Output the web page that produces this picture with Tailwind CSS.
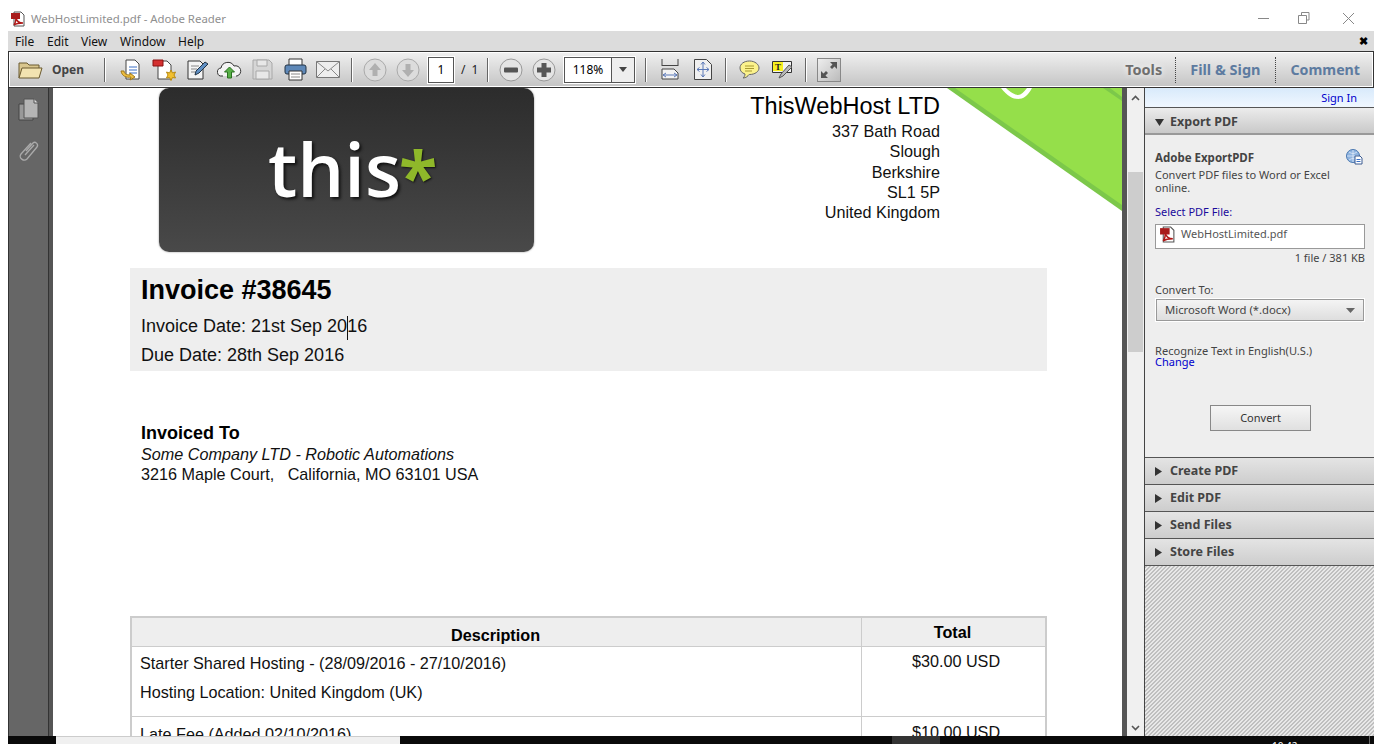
<!DOCTYPE html>
<html lang="en">
<head>
<meta charset="UTF-8" />
<title>WebHostLimited.pdf - Adobe Reader</title>
<script src="https://cdn.jsdelivr.net/npm/@tailwindcss/browser@4"></script>
</head>
<body class="bg-white overflow-hidden">
<div class="w-[1382px] h-[744px] flex flex-col overflow-hidden font-['Noto_Sans',sans-serif] text-[12px] text-[#222]">

  <!-- title bar -->
  <div class="h-[31px] shrink-0 flex items-center pl-[10px] pt-[7px] relative">
    <svg width="16" height="16" viewBox="0 0 16 16" class="shrink-0"><path d="M4 1h7l3 3v11H4z" fill="#fff" stroke="#555" /><path d="M1 2h9v6H1z" fill="#a81c1c" /><path d="M6 7c1 4 3 5 7 5-4 0-6 0-9 2 2-3 2-5 2-7z" fill="none" stroke="#b01818" stroke-width="1.4" /></svg>
    <span class="ml-[5px] text-[#8f8f8f] text-[11.400px]">WebHostLimited.pdf - Adobe Reader</span>
    <div class="absolute top-0 right-[8px] h-[31px] flex items-center text-[#777]">
      <svg width="116" height="31" viewBox="0 0 116 31"><path d="M0 18.500h11" stroke="#888" /><path d="M40.500 15.500h8v8h-8zM43.500 15v-2.500h7.500v7.500h-2" fill="none" stroke="#888" /><path d="M85 13l11 11M96 13L85 24" stroke="#888" /></svg>
    </div>
  </div>

  <!-- menu bar -->
  <div class="h-[20px] shrink-0 ml-[8px] mr-[8px] bg-[#dcdcdc] flex items-center pl-[7px] pt-[1px] text-[12px] text-[#111] relative">
    <span class="w-[32px]">File</span>
    <span class="w-[34px]">Edit</span>
    <span class="w-[39px]">View</span>
    <span class="w-[58px]">Window</span>
    <span>Help</span>
    <span class="absolute right-[6px] top-[0px] font-bold text-[11px] leading-[20px] text-black">✖</span>
  </div>

  <!-- toolbar -->
  <div class="h-[37px] shrink-0 ml-[8px] mr-[8px] border border-[#333] bg-gradient-to-b from-[#f0f0f0] to-[#c4c4c4] flex items-center relative shadow-[inset_0_0_0_1px_#fff]">
    <svg width="25" height="20" viewBox="0 0 25 20" class="ml-[9px] shrink-0"><path d="M1 18V3h8l2 2h10v3" fill="#d9c68e" stroke="#6b5a30" /><path d="M1 18L4 8h20l-3 10z" fill="#f2e3b1" stroke="#6b5a30" /></svg>
    <span class="ml-[9px] font-bold text-[12px] text-[#444] w-[33px]">Open</span>
    <div class="w-px h-[24px] bg-[#666] ml-[19px] border-r border-white box-content"></div>
    <svg width="24" height="24" viewBox="0 0 24 24" class="ml-[13px] shrink-0"><path d="M7 2h9l4 4v15H7z" fill="#fff" stroke="#444" /><path d="M10 9h8M10 12h8M10 15h8" stroke="#3a6fc4" /><path d="M2 13c1 5 5 7 10 6l-1 3 5-3-5-4 0 2c-3 0-6-1-6-4z" fill="#f0c040" stroke="#a07818" /></svg>
    <svg width="25" height="24" viewBox="0 0 25 24" class="ml-[9px] shrink-0"><path d="M6 3h9l4 4v14H6z" fill="#fff" stroke="#444" /><path d="M1 2h10v6H1z" fill="#d43030" stroke="#8a1010" /><path d="M19 12l1.500 3 3-1-1.500 3 1.500 3-3-.5-1.500 3-1.500-3-3 .5 1.500-3-1.500-3 3 1z" fill="#f2c030" stroke="#b88a10" /></svg>
    <svg width="22" height="24" viewBox="0 0 22 24" class="ml-[10px] shrink-0"><path d="M1 3h12l3 3v15H1z" fill="#f4f4f4" stroke="#333" /><path d="M4 8h8M4 11h6M4 14h4" stroke="#888" /><path d="M8 17l1-4L18 4l3 2-9 9z" fill="#5f8fc4" stroke="#234" /></svg>
    <svg width="25" height="22" viewBox="0 0 25 22" class="ml-[8px] shrink-0"><path d="M6 17H5a4 4 0 0 1-1-8 7 7 0 0 1 13-2 5 5 0 0 1 3 10h-1" fill="#f4f4f4" stroke="#333" /><path d="M12.500 8l5 5h-3v6h-4v-6h-3z" fill="#58b048" stroke="#2a7020" /></svg>
    <svg width="21" height="21" viewBox="0 0 21 21" class="ml-[10px] shrink-0"><path d="M1 1h16l3 3v16H1z" fill="#d6d6d6" stroke="#a8a8a8" /><path d="M5 1h10v6H5zM4 12h13v8H4z" fill="#e8e8e8" stroke="#a8a8a8" /></svg>
    <svg width="23" height="23" viewBox="0 0 23 23" class="ml-[11px] shrink-0"><path d="M5 7V1h13v6" fill="#fff" stroke="#333" /><rect x="1" y="7" width="21" height="9" rx="2" fill="#5e88b8" stroke="#234" /><path d="M5 13h13v9H5z" fill="#fff" stroke="#333" /><path d="M7 16h9M7 19h9" stroke="#888" /></svg>
    <svg width="24" height="17" viewBox="0 0 24 17" class="ml-[9px] shrink-0"><path d="M.500.500h23v16H.500z" fill="#eee" stroke="#777" /><path d="M.500.500L12 10 23.500.500M.500 16.500L9 8M23.500 16.500L15 8" fill="none" stroke="#888" /></svg>
    <div class="w-px h-[24px] bg-[#666] ml-[11px] border-r border-white box-content"></div>
    <svg width="24" height="24" viewBox="0 0 24 24" class="ml-[10px] shrink-0"><circle cx="12" cy="12" r="11" fill="#dcdcdc" stroke="#aaa" /><path d="M12 5l6 7h-3.500v6h-5v-6H6z" fill="#b0b0b0" /></svg>
    <svg width="24" height="24" viewBox="0 0 24 24" class="ml-[9px] shrink-0"><circle cx="12" cy="12" r="11" fill="#dcdcdc" stroke="#aaa" /><path d="M12 19l6-7h-3.500V6h-5v6H6z" fill="#b0b0b0" /></svg>
    <div class="ml-[8px] w-[26px] h-[26px] border border-[#555] bg-white shadow-[0_0_0_1px_#fff] flex items-center justify-center text-[12px] text-black shrink-0">1</div>
    <span class="ml-[7px] w-[20px] text-[12px] text-[#222] shrink-0 [word-spacing:3px]">/ 1</span>
    <div class="w-px h-[24px] bg-[#666] ml-[6px] border-r border-white box-content"></div>
    <svg width="24" height="24" viewBox="0 0 24 24" class="ml-[10px] shrink-0"><circle cx="12" cy="12" r="11" fill="#e4e4e4" stroke="#999" /><rect x="5" y="9.500" width="14" height="5" rx="1" fill="#555" /></svg>
    <svg width="24" height="24" viewBox="0 0 24 24" class="ml-[9px] shrink-0"><circle cx="12" cy="12" r="11" fill="#e4e4e4" stroke="#999" /><path d="M9.500 5h5v4.500H19v5h-4.500V19h-5v-4.500H5v-5h4.500z" fill="#555" /></svg>
    <div class="ml-[8px] w-[71px] h-[26px] border border-[#555] bg-white shadow-[0_0_0_1px_#fff] flex text-[12px] text-black shrink-0">
      <span class="w-[47px] border-r border-[#555] flex items-center justify-center">118%</span>
      <span class="flex-1 flex items-center justify-center bg-[#eee]"><svg width="8" height="5" viewBox="0 0 8 5"><path d="M0 0h8L4 5z" fill="#444" /></svg></span>
    </div>
    <div class="w-px h-[24px] bg-[#666] ml-[10px] border-r border-white box-content"></div>
    <svg width="18" height="21" viewBox="0 0 18 21" class="ml-[14px] shrink-0"><path d="M1 7V0M17 7V0M1 6.500h16" fill="none" stroke="#444" /><path d="M1 10h12l4 4v6H1z" fill="#f4f4f4" stroke="#444" /><path d="M2 16h14M2 16l3-2M2 16l3 2M16 16l-3-2M16 16l-3 2" fill="none" stroke="#5a78b8" /></svg>
    <svg width="18" height="21" viewBox="0 0 18 21" class="ml-[15px] shrink-0"><path d="M.500.500h12l5 5v15H.500z" fill="#f0f0f0" stroke="#444" /><path d="M9 3v15M3 10.500h12M9 3L7 5.500M9 3l2 2.500M9 18l-2-2.500M9 18l2-2.500M3 10.500l2.500-2M3 10.500l2.500 2M15 10.500l-2.500-2M15 10.500l-2.500 2" fill="none" stroke="#5a78b8" /></svg>
    <div class="w-px h-[24px] bg-[#666] ml-[13px] border-r border-white box-content"></div>
    <svg width="21" height="20" viewBox="0 0 21 20" class="ml-[12px] shrink-0"><path d="M10.500 1C5 1 1 4 1 8c0 3 2 5 5 6 0 2-1 3-2 4 3 0 5-2 6-3.500h.500c5.500 0 9.500-3 9.500-6.500S16 1 10.500 1z" fill="#fbf28c" stroke="#666" /><path d="M6 6h9M6 8.500h9M6 11h7" stroke="#a89a30" /></svg>
    <svg width="21" height="20" viewBox="0 0 21 20" class="ml-[12px] shrink-0"><path d="M.500 1.500h19v11H.500z" fill="#f2f2f2" stroke="#333" /><path d="M1 2h10v9H1z" fill="#f8f020" /><text x="3" y="10" font-size="9" font-weight="bold" fill="#222" font-family="Liberation Serif">T</text><path d="M7 18l2-4L17 5l3 2-9 9z" fill="#b8b8b8" stroke="#555" /></svg>
    <div class="w-px h-[24px] bg-[#666] ml-[12px] border-r border-white box-content"></div>
    <div class="ml-[10px] w-[24px] h-[24px] border border-[#888] bg-gradient-to-br from-[#eee] to-[#bbb] flex items-center justify-center shrink-0">
      <svg width="18" height="18" viewBox="0 0 18 18"><path d="M10 1h7v7l-2.500-2.500L12 8 10 6l2.500-2.500zM8 17H1v-7l2.500 2.500L6 10l2 2-2.500 2.500z" fill="#555" /></svg>
    </div>
    <div class="ml-auto flex items-center h-full pr-[13px]">
      <span class="font-bold text-[14.500px] text-[#6f6f6f] [text-shadow:0_0_6px_#fff]">Tools</span>
      <span class="h-[26px] border-l border-dotted border-[#444] ml-[13px] mr-[14px]"></span>
      <span class="font-bold text-[14.500px] text-[#5d7ba0]">Fill &amp; Sign</span>
      <span class="h-[26px] border-l border-dotted border-[#444] ml-[14px] mr-[15px]"></span>
      <span class="font-bold text-[14.200px] text-[#5d7ba0]">Comment</span>
    </div>
  </div>

  <!-- main area -->
  <div class="flex-1 min-h-0 ml-[8px] mr-[8px] flex overflow-hidden">
    <div class="w-[41px] shrink-0 bg-[#666] border-x border-[#333] flex flex-col items-center pt-[10px] gap-[17px]">
      <svg width="22" height="24" viewBox="0 0 22 24"><path d="M1 6h14v16H1z" fill="#999" stroke="#444" /><path d="M6 1h10l4 4v15H6z" fill="#b5b5b5" stroke="#555" /><path d="M16 1v4h4" fill="#ddd" stroke="#555" /></svg>
      <svg width="22" height="24" viewBox="0 0 22 24"><path d="M8 12l7-8c2-2 6 1 4 4L9 20c-3 3-9-1-6-5L13 4M7 16l9-10" fill="none" stroke="#aaa" stroke-width="1.300" /></svg>
    </div>
    <div class="w-[4px] shrink-0 bg-[#555]"></div>

    <!-- document page -->
    <div class="w-[1069px] shrink-0 bg-white relative overflow-hidden font-['Liberation_Sans',sans-serif] text-[#111] text-[16.200px]">
      <svg width="175" height="125" viewBox="0 0 175 125" class="absolute top-0 right-0">
        <path d="M0 0H175V123z" fill="#7cc84a" />
        <path d="M8 0H175V117z" fill="#95df4a" />
        <path d="M156 0L175 13V9L163 0z" fill="#7cc84a" />
        <path d="M54 0c6 8 12 11 17 11s10-3 14-11h-5c-3 4-6 7-9 7s-8-3-12-7z" fill="#fff" />
      </svg>

      <div class="h-[180px] flex justify-between pl-[106px] pr-[182px] relative">
        <div class="w-[375px] h-[164px] rounded-[10px] bg-gradient-to-b from-[#2c2c2c] to-[#494949] shadow-[0_0_2px_#888] flex items-start pl-[109px] pt-[44px] font-['Open_Sans',sans-serif] font-semibold leading-none">
          <span class="text-[74px] text-white [text-shadow:2px_2px_3px_#111]">this</span><span class="text-[70px] text-[#8fb82a] font-bold [text-shadow:1px_1px_2px_#111] -ml-[2px] mt-[8px]">*</span>
        </div>
        <div class="text-right pt-[4px] leading-[20.300px]">
          <div class="text-[23.500px] leading-[28px] mb-[1px] text-black">ThisWebHost LTD</div>
          <div>337 Bath Road</div>
          <div>Slough</div>
          <div>Berkshire</div>
          <div>SL1 5P</div>
          <div>United Kingdom</div>
        </div>
      </div>

      <div class="ml-[77px] w-[917px] h-[103px] bg-[#eee] pl-[11px] pt-[5px] relative">
        <div class="text-[27px] leading-[34px] font-bold text-black">Invoice #38645</div>
        <div class="text-[18px] leading-[29px] mt-[5px]">Invoice Date: 21st Sep 2016</div>
        <div class="text-[18px] leading-[29px]">Due Date: 28th Sep 2016</div>
        <div class="absolute left-[217px] top-[48px] w-px h-[24px] bg-[#111]"></div>
      </div>

      <div class="ml-[88px] mt-[52px] leading-[20.300px]">
        <div class="text-[18px] font-bold text-black mb-[1px]">Invoiced To</div>
        <div class="italic">Some Company LTD - Robotic Automations</div>
        <div class="-mt-[1px]">3216 Maple Court, &nbsp; California, MO 63101 USA</div>
      </div>

      <div class="ml-[77px] mt-[132px] w-[917px] border-2 border-[#ccc] border-b-0">
        <div class="flex h-[29px] bg-[#eee] border-b border-[#ccc] font-bold text-black">
          <div class="w-[729px] text-center pt-[7px] leading-[20px] pr-[2px]">Description</div>
          <div class="flex-1 border-l border-[#ccc] text-center pt-[4px] leading-[20px] pr-[2px]">Total</div>
        </div>
        <div class="flex h-[70px] border-b border-[#ccc]">
          <div class="w-[729px] pl-[8px] pt-[2px] leading-[29px]">
            <div>Starter Shared Hosting - (28/09/2016 - 27/10/2016)</div>
            <div>Hosting Location: United Kingdom (UK)</div>
          </div>
          <div class="flex-1 border-l border-[#ccc] text-center pt-[4px] pl-[5px] leading-[20px]">$30.00 USD</div>
        </div>
        <div class="flex h-[40px]">
          <div class="w-[729px] pl-[8px] pt-[7px] leading-[20px]">Late Fee (Added 02/10/2016)</div>
          <div class="flex-1 border-l border-[#ccc] text-center pt-[5px] pl-[5px] leading-[20px]">$10.00 USD</div>
        </div>
      </div>
    </div>

    <!-- gutter and scrollbar -->
    <div class="w-[5px] shrink-0 bg-[#555]"></div>
    <div class="w-[17px] shrink-0 bg-[#f0f0f0] relative flex flex-col items-center">
      <svg width="9" height="6" viewBox="0 0 9 6" class="mt-[7px]"><path d="M1 5l3.500-3.500L8 5" fill="none" stroke="#555" stroke-width="1.600" /></svg>
      <div class="absolute left-[1px] right-[1px] top-[84px] h-[180px] bg-[#cdcdcd]"></div>
      <svg width="9" height="6" viewBox="0 0 9 6" class="mt-auto mb-[5px]"><path d="M1 1l3.500 3.500L8 1" fill="none" stroke="#555" stroke-width="1.600" /></svg>
    </div>

    <!-- right panel -->
    <div class="w-[230px] shrink-0 border-l border-[#444] flex flex-col text-[11px] text-[#444]">
      <div class="h-[20px] border-b border-[#555] bg-gradient-to-b from-[#d8eafb] to-[#f0f7ff] text-right pr-[17px] text-[#0000cc] leading-[20px]">Sign In</div>
      <div class="h-[27px] bg-gradient-to-b from-[#ececec] to-[#c9c9c9] border-b-2 border-[#999] flex items-center pl-[10px] pt-[3px] font-bold text-[12.500px] text-[#444]">
        <svg width="9" height="7" viewBox="0 0 9 7"><path d="M0 0h9L4.500 7z" fill="#333" /></svg>
        <span class="ml-[6px]">Export PDF</span>
      </div>
      <div class="h-[323px] bg-[#eee] px-[10px] pt-[13px] relative border-b border-[#555]">
        <div class="font-bold text-[11.500px] leading-[20px]">Adobe ExportPDF</div>
        <svg width="17" height="16" viewBox="0 0 17 16" class="absolute right-[11px] top-[14px]"><circle cx="7" cy="7" r="6.500" fill="#8fb4e0" stroke="#4a78b0" /><path d="M1 7h12M7 1v12M3 3c3 2 5 2 8 0M3 11c3-2 5-2 8 0" fill="none" stroke="#dfeaf8" stroke-width=".8" /><path d="M9 7h5l2 2v6H9z" fill="#fff" stroke="#3a5a90" /><path d="M10.500 10.500h4M10.500 12.500h4" stroke="#3a6fc4" /></svg>
        <div class="leading-[13px] w-[190px]">Convert PDF files to Word or Excel online.</div>
        <div class="text-[#1a0a9c] mt-[11px] leading-[14px]">Select PDF File:</div>
        <div class="mt-[5px] h-[25px] w-[210px] bg-white border border-[#999] flex items-center pl-[3px] pb-[4px]">
          <svg width="17" height="17" viewBox="0 0 16 16"><path d="M4 1h7l3 3v11H4z" fill="#fff" stroke="#555" /><path d="M1 2h9v6H1z" fill="#a81c1c" /><path d="M6 7c1 4 3 5 7 5-4 0-6 0-9 2 2-3 2-5 2-7z" fill="none" stroke="#b01818" stroke-width="1.400" /></svg>
          <span class="ml-[5px] text-[#555]">WebHostLimited.pdf</span>
        </div>
        <div class="text-right leading-[14px] mt-[2px] w-[210px]">1 file / 381 KB</div>
        <div class="mt-[18px] leading-[14px]">Convert To:</div>
        <div class="mt-[2px] ml-[1px] w-[208px] h-[22px] border border-[#999] bg-gradient-to-b from-[#f4f4f4] to-[#dedede] shadow-[0_0_0_1px_#fff] flex items-center justify-between pl-[8px] pr-[8px] text-[11.300px]">
          <span>Microsoft Word (*.docx)</span>
          <svg width="9" height="5" viewBox="0 0 9 5"><path d="M0 0h9L4.500 5z" fill="#666" /></svg>
        </div>
        <div class="mt-[24px] leading-[11px] text-[11.100px] whitespace-nowrap">Recognize Text in English(U.S.)</div>
        <div class="text-[#0000cc] leading-[11px]">Change</div>
        <div class="mt-[38px] ml-[55px] w-[101px] h-[26px] border border-[#888] bg-gradient-to-b from-[#f6f6f6] to-[#e0e0e0] flex items-center justify-center text-[11px] text-[#333]">Convert</div>
      </div>
      <div class="h-[27px] bg-gradient-to-b from-[#e4e4e4] to-[#cdcdcd] border-b border-[#555] flex items-center pl-[10px] font-bold text-[12.500px]"><svg width="7" height="9" viewBox="0 0 7 9"><path d="M0 0v9l7-4.500z" fill="#333" /></svg><span class="ml-[8px]">Create PDF</span></div>
      <div class="h-[27px] bg-gradient-to-b from-[#e4e4e4] to-[#cdcdcd] border-b border-[#555] flex items-center pl-[10px] font-bold text-[12.500px]"><svg width="7" height="9" viewBox="0 0 7 9"><path d="M0 0v9l7-4.500z" fill="#333" /></svg><span class="ml-[8px]">Edit PDF</span></div>
      <div class="h-[27px] bg-gradient-to-b from-[#e4e4e4] to-[#cdcdcd] border-b border-[#555] flex items-center pl-[10px] font-bold text-[12.500px]"><svg width="7" height="9" viewBox="0 0 7 9"><path d="M0 0v9l7-4.500z" fill="#333" /></svg><span class="ml-[8px]">Send Files</span></div>
      <div class="h-[27px] bg-gradient-to-b from-[#e4e4e4] to-[#cdcdcd] border-b border-[#555] flex items-center pl-[10px] font-bold text-[12.500px]"><svg width="7" height="9" viewBox="0 0 7 9"><path d="M0 0v9l7-4.500z" fill="#333" /></svg><span class="ml-[8px]">Store Files</span></div>
      <div class="flex-1 bg-[repeating-linear-gradient(135deg,#bfbfbf_0,#bfbfbf_1.900px,#e8e8e8_1.900px,#e8e8e8_2.830px)]"></div>
    </div>
  </div>

  <!-- strip of the taskbar under the window -->
  <div class="h-[8px] shrink-0 flex bg-[#0a0a0a] ml-[8px] mr-[8px] relative overflow-hidden">
    <div class="w-[48px]"></div>
    <div class="w-[344px] bg-[#f0f0f0] border-t border-[#ccc]"></div>
    <div class="w-[492px]"></div>
    <div class="w-[48px] bg-[#333]"></div>
    <span class="absolute left-[1264px] top-[4px] text-white text-[10px] leading-[12px]">10:42</span>
    <div class="absolute left-[1361px] top-0 bottom-0 w-px bg-[#666]"></div>
  </div>
</div>
</body>
</html>
